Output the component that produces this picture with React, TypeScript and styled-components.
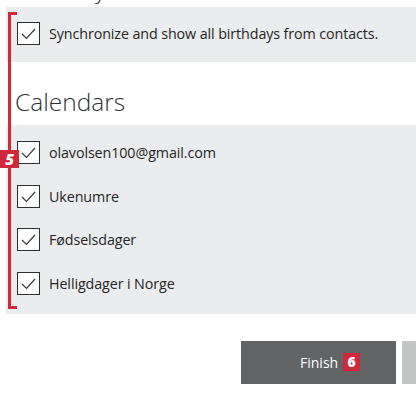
import React from "react";
import styled, { createGlobalStyle } from "styled-components";

const Global = createGlobalStyle`
  html, body { margin: 0; padding: 0; background: #ffffff; }
  body { overflow: hidden; font-family: "Open Sans", "Noto Sans", sans-serif; }
`;

const Page = styled.div`
  position: relative;
  width: 416px;
  height: 396px;
  overflow: hidden;
  background: #ffffff;
  display: flex;
  flex-direction: column;
`;

const ClippedHeading = styled.div`
  height: 7px;
  overflow: hidden;
  display: flex;
  align-items: flex-end;
  padding-left: 16px;
`;

const HeadingText = styled.div`
  font-family: "Open Sans", "Noto Sans", sans-serif;
  font-weight: 300;
  font-size: 24px;
  line-height: 34px;
  color: #333;
  margin-bottom: 1px;
`;

const Panel = styled.div<{ $padTop: number; $padBottom: number }>`
  margin-left: 6px;
  background: #ebeced;
  padding: ${(p) => p.$padTop}px 0 ${(p) => p.$padBottom}px 11px;
  display: flex;
  flex-direction: column;
`;

const Row = styled.label`
  display: flex;
  align-items: center;
  gap: 9px;
  height: 23px;
  & + & {
    margin-top: 20.5px;
  }
`;

const Box = styled.span`
  box-sizing: border-box;
  width: 23px;
  height: 23px;
  border: 1px solid #2e2e2e;
  background: #ffffff;
  display: flex;
  align-items: center;
  justify-content: center;
  flex: none;
`;

const Label = styled.span`
  font-family: "Open Sans", "Noto Sans", sans-serif;
  font-size: 14.3px;
  color: #262626;
  white-space: nowrap;
  letter-spacing: -0.1px;
`;

const SectionTitle = styled.h2`
  margin: 0;
  height: 63px;
  box-sizing: border-box;
  padding: 23px 0 0 15px;
  font-family: "Open Sans", "Noto Sans", sans-serif;
  font-weight: 300;
  font-size: 24.5px;
  line-height: 34px;
  color: #333;
`;

const ButtonBar = styled.div`
  display: flex;
  gap: 6px;
  padding: 27px 0 0 241px;
`;

const PrimaryButton = styled.button`
  box-sizing: border-box;
  width: 155px;
  height: 43px;
  border: none;
  background: #626364;
  color: #ffffff;
  font-family: "Open Sans", "Noto Sans", sans-serif;
  font-size: 14px;
  display: flex;
  align-items: center;
  justify-content: flex-start;
  padding: 0 0 0 59px;
  gap: 5px;
  flex: none;
`;

const SecondaryButton = styled.button`
  width: 60px;
  height: 43px;
  border: none;
  background: #c4c5c5;
  flex: none;
`;

const Badge = styled.span`
  display: inline-flex;
  align-items: center;
  justify-content: center;
  width: 17px;
  height: 18px;
  background: #d0273b;
  color: #fff;
  font-family: "Open Sans", "Noto Sans", sans-serif;
  font-weight: 800;
  font-size: 14px;
  line-height: 1;
`;

const Bracket = styled.div`
  position: absolute;
  left: 8px;
  top: 12px;
  width: 9px;
  height: 297px;
  box-sizing: border-box;
  border-left: 3px solid #d0283c;
  border-top: 3px solid #d0283c;
  border-bottom: 3px solid #d0283c;
  pointer-events: none;
`;

const CornerBadge = styled(Badge)`
  position: absolute;
  left: 0;
  top: 150px;
  width: 19px;
  height: 18px;
  font-style: italic;
  font-size: 15px;
`;

const Check = () => (
  <svg width="17" height="17" viewBox="0 0 17 17" fill="none">
    <path d="M2 9 L6.5 13.5 L15 4" stroke="#3a3a3a" strokeWidth="1.2" />
  </svg>
);

const CheckRow = ({ text }: { text: string }) => (
  <Row>
    <Box>
      <Check />
    </Box>
    <Label>{text}</Label>
  </Row>
);

export default function App() {
  const calendars = [
    "olavolsen100@gmail.com",
    "Ukenumre",
    "Fødselsdager",
    "Helligdager i Norge",
  ];
  return (
    <>
      <Global />
      <Page>
        <ClippedHeading>
          <HeadingText>Birthdays</HeadingText>
        </ClippedHeading>
        <Panel $padTop={15} $padBottom={17}>
          <CheckRow text="Synchronize and show all birthdays from contacts." />
        </Panel>
        <SectionTitle>Calendars</SectionTitle>
        <Panel $padTop={16} $padBottom={19}>
          {calendars.map((c) => (
            <CheckRow key={c} text={c} />
          ))}
        </Panel>
        <ButtonBar>
          <PrimaryButton>
            Finish <Badge>6</Badge>
          </PrimaryButton>
          <SecondaryButton aria-label="Cancel" />
        </ButtonBar>
        <Bracket />
        <CornerBadge>5</CornerBadge>
      </Page>
    </>
  );
}
